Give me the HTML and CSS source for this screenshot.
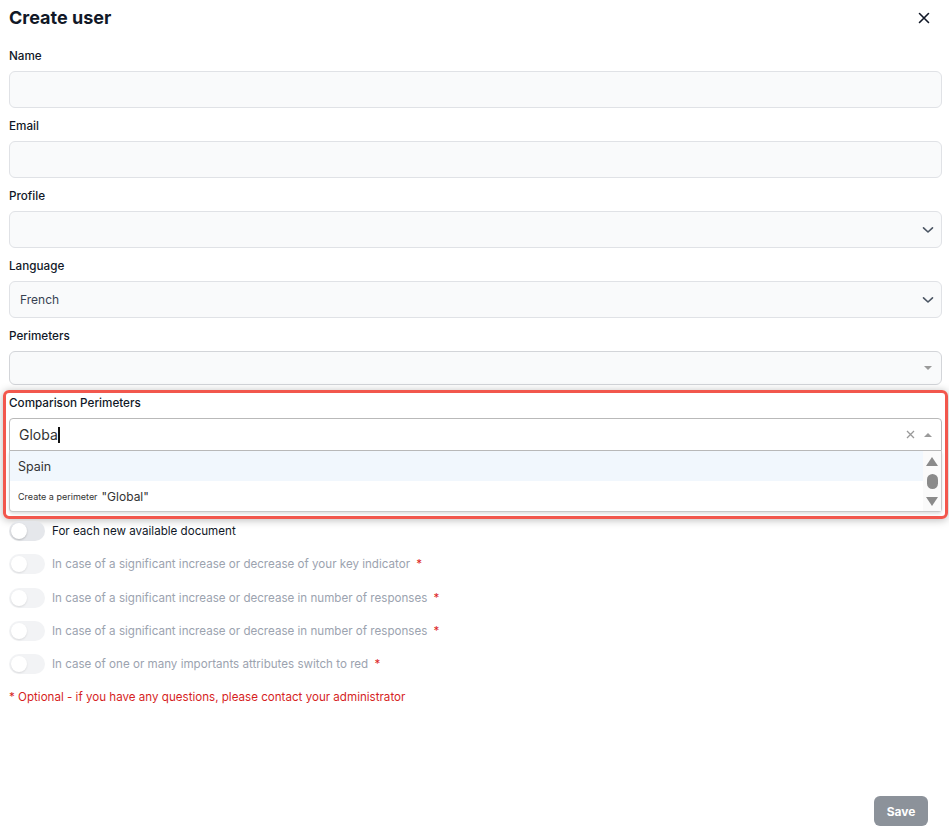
FILE: index.html
```html
<!DOCTYPE html>
<html lang="en">
<head>
<meta charset="utf-8">
<title>Create user</title>
<link rel="stylesheet" href="styles.css">
</head>
<body>
<div class="page">
  <header class="head">
    <h1 class="title">Create user</h1>
    <button class="close" aria-label="Close">
      <svg width="12" height="12" viewBox="0 0 12 12"><path d="M1.5 1.5 L10.5 10.5 M10.5 1.5 L1.5 10.5" stroke="#111827" stroke-width="1.6" stroke-linecap="round" fill="none"/></svg>
    </button>
  </header>

  <div class="field">
    <label class="label">Name</label>
    <div class="input"></div>
  </div>
  <div class="field">
    <label class="label">Email</label>
    <div class="input"></div>
  </div>
  <div class="field">
    <label class="label">Profile</label>
    <div class="input select">
      <span></span>
      <svg class="chev" width="12" height="8" viewBox="0 0 12 8"><path d="M1.5 1.8 L6 6 L10.5 1.8" stroke="#4b5563" stroke-width="1.6" fill="none" stroke-linecap="round" stroke-linejoin="round"/></svg>
    </div>
  </div>
  <div class="field">
    <label class="label">Language</label>
    <div class="input select">
      <span class="value">French</span>
      <svg class="chev" width="12" height="8" viewBox="0 0 12 8"><path d="M1.5 1.8 L6 6 L10.5 1.8" stroke="#4b5563" stroke-width="1.6" fill="none" stroke-linecap="round" stroke-linejoin="round"/></svg>
    </div>
  </div>
  <div class="field">
    <label class="label">Perimeters</label>
    <div class="input multi">
      <span></span>
      <span class="tri down"></span>
    </div>
  </div>

  <div class="highlight">
    <label class="label">Comparison Perimeters</label>
    <div class="combo">
      <span class="typed">Globa<span class="cursor"></span></span>
      <span class="combo-icons">
        <svg width="9" height="9" viewBox="0 0 9 9"><path d="M1 1 L8 8 M8 1 L1 8" stroke="#999" stroke-width="1.3" fill="none"/></svg>
        <span class="tri up"></span>
      </span>
    </div>
    <div class="list">
      <div class="options">
        <div class="option active">Spain</div>
        <div class="option"><span class="small">Create a perimeter</span> <span>"Global"</span></div>
      </div>
      <div class="scrollbar">
        <span class="sb-up"></span>
        <span class="sb-thumb"></span>
        <span class="sb-down"></span>
      </div>
    </div>
  </div>

  <div class="toggles">
    <div class="trow">
      <span class="switch"><span class="knob"></span></span>
      <span class="tlabel">For each new available document</span>
    </div>
    <div class="trow disabled">
      <span class="switch"><span class="knob"></span></span>
      <span class="tlabel">In case of a significant increase or decrease of your key indicator <span class="req">*</span></span>
    </div>
    <div class="trow disabled">
      <span class="switch"><span class="knob"></span></span>
      <span class="tlabel">In case of a significant increase or decrease in number of responses <span class="req">*</span></span>
    </div>
    <div class="trow disabled">
      <span class="switch"><span class="knob"></span></span>
      <span class="tlabel">In case of a significant increase or decrease in number of responses <span class="req">*</span></span>
    </div>
    <div class="trow disabled">
      <span class="switch"><span class="knob"></span></span>
      <span class="tlabel">In case of one or many importants attributes switch to red <span class="req">*</span></span>
    </div>
  </div>

  <p class="note">* Optional - if you have any questions, please contact your administrator</p>

  <footer class="foot">
    <button class="save">Save</button>
  </footer>
</div>
</body>
</html>
```

FILE: styles.css
```css
* { box-sizing: border-box; }
html, body { margin: 0; padding: 0; background: #fff; }
body { font-family: Inter, "Noto Sans", "Liberation Sans", sans-serif; color: #111827; }

.page {
  min-height: 834px;
  display: flex;
  flex-direction: column;
  padding: 0 7px 0 9px;
}

.head {
  display: flex;
  justify-content: space-between;
  align-items: center;
  height: 36px;
}
.title { margin: 0; font-size: 18px; font-weight: 700; line-height: 24px; }
.close {
  border: 0; background: none; padding: 0; margin-right: 11px;
  width: 14px; height: 14px; display: flex; align-items: center; justify-content: center;
}

.field { display: flex; flex-direction: column; margin-top: 12px; }
.field + .field { margin-top: 10px; }
.label { font-size: 11.7px; font-weight: 500; line-height: 16px; color: #111827; margin-bottom: 7px; }

.input {
  height: 37px;
  border: 1px solid #e0e2e6;
  border-radius: 6px;
  background: #f9fafb;
  display: flex;
  align-items: center;
  justify-content: space-between;
  padding: 0 7px 0 10px;
}
.value { font-size: 12px; color: #374151; }
.chev { margin-top: 1px; }
.multi { height: 34px; border-color: #d3d5d9; padding-right: 9px; }

.tri { width: 0; height: 0; border-left: 4px solid transparent; border-right: 4px solid transparent; }
.tri.down { border-top: 4px solid #9a9a9a; }
.tri.up { border-bottom: 4px solid #9a9a9a; }

.highlight {
  margin: 5px -6px 0;
  padding: 2px 3px 4px;
  border: 3px solid #f2574d;
  border-radius: 6px;
  box-shadow: 0 1px 8px rgba(0,0,0,0.28);
  display: flex;
  flex-direction: column;
}
.highlight .label { margin-bottom: 7px; }

.combo {
  height: 33px;
  border: 1px solid #b9b9b9;
  border-radius: 4px 4px 0 0;
  background: #fff;
  display: flex;
  align-items: center;
  justify-content: space-between;
  padding: 0 9px 0 9px;
}
.typed { font-size: 14px; color: #333; display: flex; align-items: center; }
.cursor { display: inline-block; width: 2px; height: 16px; background: #111; margin-left: 0; }
.combo-icons { display: flex; align-items: center; gap: 9px; }

.list {
  display: flex;
  border: 1px solid #c8c8c8;
  border-top: 0;
  border-radius: 0 0 4px 4px;
  background: #fff;
  box-shadow: 0 2px 3px rgba(0,0,0,0.12);
}
.options { flex: 1; display: flex; flex-direction: column; }
.option {
  height: 30px;
  display: flex;
  align-items: center;
  padding-left: 8px;
  font-size: 12px;
  color: #333;
}
.option.active { background: #f1f7fd; font-size: 12.5px; }
.small { font-size: 9px; margin-right: 4px; }

.scrollbar {
  width: 18px;
  background: #fafafa;
  display: flex;
  flex-direction: column;
  align-items: center;
  justify-content: space-between;
  padding: 6px 0 5px;
}
.sb-up { width: 0; height: 0; border-left: 6px solid transparent; border-right: 6px solid transparent; border-bottom: 9px solid #8a8a8a; }
.sb-down { width: 0; height: 0; border-left: 6px solid transparent; border-right: 6px solid transparent; border-top: 9px solid #8a8a8a; }
.sb-thumb { width: 11px; height: 15px; border-radius: 6px; background: #8a8a8a; }

.toggles { display: flex; flex-direction: column; gap: 13.25px; margin-top: 2px; }
.trow { display: flex; align-items: center; gap: 7px; height: 20px; }
.switch {
  width: 36px; height: 20px; border-radius: 10px; background: #e5e7eb;
  display: flex; align-items: center; padding: 2px;
}
.knob { width: 16px; height: 16px; border-radius: 50%; background: #fff; box-shadow: 0 1px 2px rgba(0,0,0,0.2); }
.tlabel { font-size: 11.6px; color: #111827; }
.disabled .switch { background: #f2f3f5; }
.disabled .knob { box-shadow: 0 1px 2px rgba(0,0,0,0.1); }
.disabled .tlabel { color: #9ca3af; }
.req { color: #dc2626; margin-left: 3px; }

.note { margin: 15px 0 0; font-size: 11.6px; color: #d61f1f; line-height: 16px; }

.foot { margin-top: auto; display: flex; justify-content: flex-end; padding: 0 14px 8px 0; }
.save {
  width: 54px; height: 30px; border: 0; border-radius: 6px;
  background: #8c929a; color: #fff; font-family: inherit; font-weight: 700; font-size: 12px;
}
```
